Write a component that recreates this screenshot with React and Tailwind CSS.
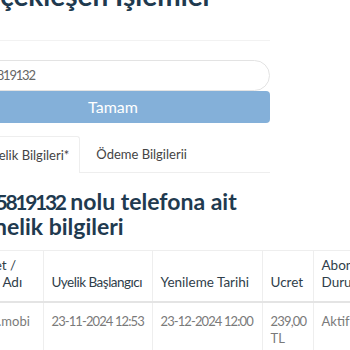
import React from 'react';

const COLS = [
  { w: 'w-[87px]', head: <>Hizmet /<br />Servis Adı</>, body: 'Exxen.mobi' },
  { w: 'w-[109px]', head: <span className="tracking-[-0.5px]">Uyelik Başlangıcı</span>, body: <span className="tracking-[-0.9px]">23-11-2024 12:53</span> },
  { w: 'w-[110px]', head: 'Yenileme Tarihi', body: <span className="tracking-[-0.9px]">23-12-2024 12:00</span> },
  { w: 'w-[51px]', head: 'Ucret', body: <><span className="tracking-[-0.8px]">239,00</span><br />TL</> },
  { w: 'w-[90px]', head: <>Abone<br />Durumu</>, body: 'Aktif' },
];

export default function App() {
  return (
    <div className="w-[350px] h-[350px] overflow-hidden bg-white font-['Lato',sans-serif]">
      <div className="-ml-[44px] w-[314px] -mt-[21px]">
        {/* Title */}
        <h1 className="text-[28px] leading-[32px] font-bold text-[#1f3a4f] whitespace-nowrap -ml-[1px]">
          Gerçekleşen İşlemler
        </h1>
        <div className="mt-[29px] border-t border-[#f2f2f2]" />

        {/* Search */}
        <div className="mt-[19px] h-[31px] rounded-full border border-[#e3e3e3] flex items-center pl-[8px] text-[13px] tracking-[-1.2px] text-[#666]">
          05325819132
        </div>
        <button className="w-full h-[32px] rounded-[4px] bg-[#84b0d9] text-white text-[16px] flex items-center justify-center">
          Tamam
        </button>

        {/* Tabs */}
        <div className="mt-[13px] flex border-b border-[#eeeeee] h-[37px]">
          <div className="pl-[11px] pr-[10px] pt-[9px] border border-b-0 border-[#eeeeee] rounded-t-[3px] bg-white text-[13px] text-[#444] -mb-px">
            Abonelik Bilgileri*
          </div>
          <div className="pl-[16px] pt-[9px] text-[13px] text-[#444]">Ödeme Bilgilerii</div>
        </div>

        {/* Heading */}
        <h2 className="mt-[16px] text-[23px] leading-[25px] font-bold text-[#1f3a4f] whitespace-nowrap">
          <span className="text-[21px] tracking-[-2.3px]">05325819132</span> nolu telefona ait<br />abonelik bilgileri
        </h2>

        {/* Table */}
        <table className="mt-[11px] border-collapse table-fixed w-[447px]">
          <thead>
            <tr className="border-t border-[#eeeeee] border-b-2 border-b-[#e4e4e4]">
              {COLS.map((c, i) => (
                <th
                  key={i}
                  className={`${c.w} h-[51px] px-[8px] pb-[10px] align-bottom text-left text-[13.5px] font-normal leading-[17px] whitespace-nowrap text-[#2f3e4a] border-l border-[#eeeeee] first:border-l-0`}
                >
                  {c.head}
                </th>
              ))}
            </tr>
          </thead>
          <tbody>
            <tr>
              {COLS.map((c, i) => (
                <td
                  key={i}
                  className={`${c.w} px-[8px] pt-[10px] pb-[14px] align-top text-[13px] leading-[17px] whitespace-nowrap text-[#7a7a7a] border-l border-[#eeeeee] first:border-l-0`}
                >
                  {c.body}
                </td>
              ))}
            </tr>
          </tbody>
        </table>
      </div>
    </div>
  );
}
